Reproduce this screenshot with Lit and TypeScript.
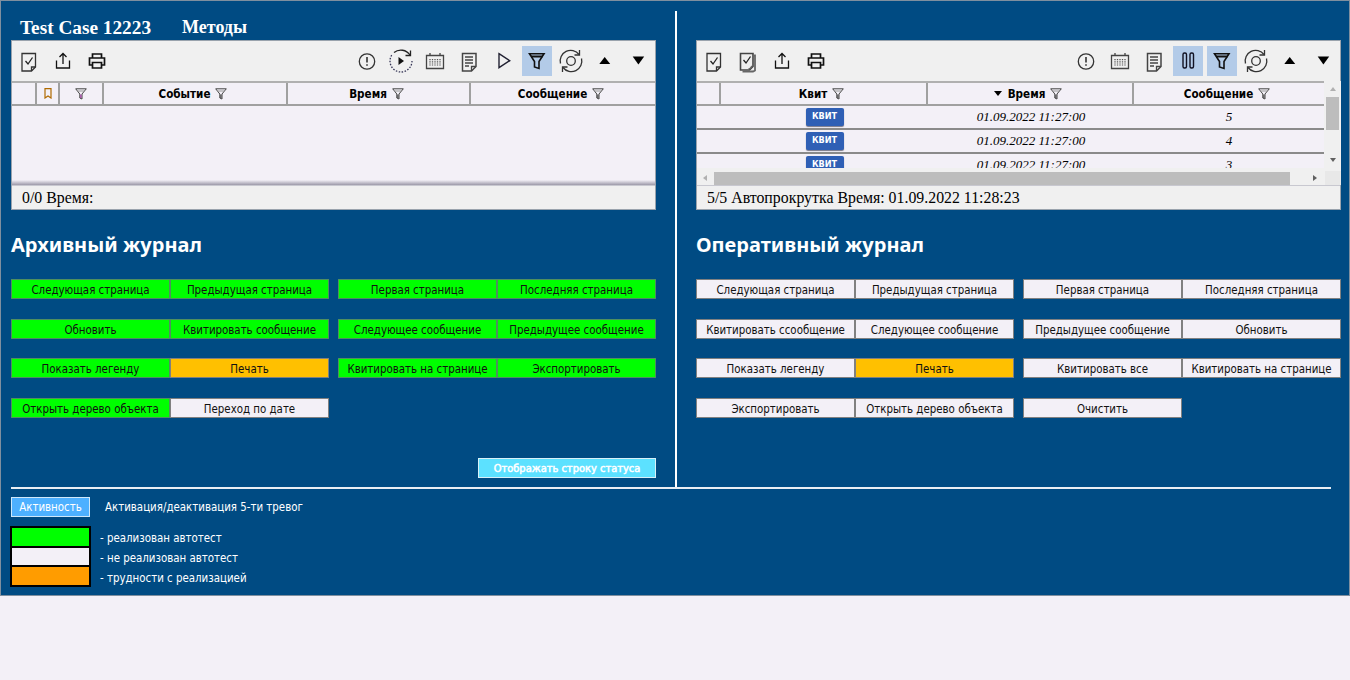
import { LitElement, html, css, svg } from "lit";
import { customElement } from "lit/decorators.js";

type Kind = "g" | "w" | "o" | "";
type Btn = [string, Kind];

const ARCHIVE: Btn[] = [
  ["Следующая страница", "g"], ["Предыдущая страница", "g"], ["Первая страница", "g"], ["Последняя страница", "g"],
  ["Обновить", "g"], ["Квитировать сообщение", "g"], ["Следующее сообщение", "g"], ["Предыдущее сообщение", "g"],
  ["Показать легенду", "g"], ["Печать", "o"], ["Квитировать на странице", "g"], ["Экспортировать", "g"],
  ["Открыть дерево объекта", "g"], ["Переход по дате", "w"],
];

const ONLINE: Btn[] = [
  ["Следующая страница", "w"], ["Предыдущая страница", "w"], ["Первая страница", "w"], ["Последняя страница", "w"],
  ["Квитировать ссообщение", "w"], ["Следующее сообщение", "w"], ["Предыдущее сообщение", "w"], ["Обновить", "w"],
  ["Показать легенду", "w"], ["Печать", "o"], ["Квитировать все", "w"], ["Квитировать на странице", "w"],
  ["Экспортировать", "w"], ["Открыть дерево объекта", "w"], ["Очистить", "w"],
];

const ic = (body: unknown) => html`<svg width="30" height="30" viewBox="0 0 30 30" fill="none" stroke="#222" stroke-width="1.3">${body}</svg>`;

const ICONS: Record<string, unknown> = {
  ack: ic(svg`<path d="M8 7.500h13.500v13.500l-4 4H8z" stroke="#333"/><path d="M17.500 25v-4h4" stroke="#333"/><path d="M11.500 15l2.500 3 4.500-6.500"/>`),
  ackAll: ic(svg`<path d="M7.500 7.500h12.500v13l-3.500 3.500h-9z" fill="#eee" stroke="#444" stroke-width="1.600"/><path d="M20 9.500h2v15l-2 1h-10.500" stroke="#666" stroke-width="1.800"/><path d="M10.500 14l2.500 3 4.500-6.500"/><path d="M15.500 23l2-1 1.500-2" stroke="#666"/>`),
  export: ic(svg`<path d="M8.500 14.500v7.500h13v-7.500" stroke="#111"/><path d="M15 18V7.500M11.500 11l3.500-3.500 3.500 3.500" stroke="#111"/>`),
  print: ic(svg`<path d="M10.500 12V8h9v4M10.500 19H7.500v-7h15v7h-3" stroke-width="1.700" stroke="#111"/><path d="M10.500 16.500h9v5.500h-9z" stroke-width="1.700" stroke="#111"/>`),
  alert: ic(svg`<circle cx="15" cy="15.500" r="7.700" stroke="#333"/><path d="M15 11v5.500M15 18.200v1.600" stroke-width="1.600" stroke="#333"/>`),
  playClock: ic(svg`<path d="M8 6.500A11 11 0 0 1 24 9" stroke="#222"/><path d="M24.500 4.500v5h-5" stroke="#222"/><path d="M26 15A11 11 0 0 1 4 15a11 11 0 0 1 2.500-7" stroke="#335" stroke-dasharray="1.500 1.500"/><path d="M12.500 11l5.500 4-5.500 4z" fill="#111" stroke="none"/>`),
  calendar: ic(svg`<path d="M6.500 9.500h17v13h-17z" stroke="#444"/><path d="M10 7v3M20 7v3" stroke="#444"/><path d="M10 13v7M12.500 13v7M15 13v7M17.500 13v7M20 13v7" stroke="#555" stroke-dasharray="1.200 1"/>`),
  doc: ic(svg`<path d="M8.500 7.500h13.500v13l-4.500 4.500h-9z" stroke="#444" stroke-width="1.500"/><path d="M17.500 25v-4.500h4.500" stroke="#444"/><path d="M11 11h8M11 14h8M11 17h8M11 20h4" stroke="#444"/>`),
  play: ic(svg`<path d="M11 7.700L21.700 14.700 11 21.700z" stroke="#223" stroke-width="1.400"/>`),
  filter: ic(svg`<path d="M7.500 7.700h14.500L17 15.500v7l-4.500-1.500v-5.500z" stroke="#111" stroke-width="1.600"/><path d="M9 10.500h11.500" stroke="#111" stroke-width="2"/>`),
  sync: ic(svg`<circle cx="15" cy="15" r="4.300" stroke="#333"/><path d="M4.500 17.500A10.500 10.500 0 0 1 23 8.500M25.500 12.500A10.500 10.500 0 0 1 7 21.500" stroke="#333"/><path d="M23.500 4v5h-5M6.500 26v-5h5" stroke="#333"/>`),
  up: ic(svg`<path d="M9.300 18L14.700 11 20.200 18z" fill="#000" stroke="none"/>`),
  down: ic(svg`<path d="M8.700 10.500h11.500l-5.800 8z" fill="#000" stroke="none"/>`),
  pause: ic(svg`<rect x="10" y="7" width="3.500" height="15" rx="1.500" stroke="#112" stroke-width="1.400"/><rect x="17" y="7" width="3.500" height="15" rx="1.500" stroke="#112" stroke-width="1.400"/>`),
};

const funnel = (stem = "#333") => html`<svg class="funnel" width="12" height="12" viewBox="0 0 12 12" fill="none"><path d="M.7.8h10.600L7 6v5l-2.200-1V6z" stroke="#444" stroke-width="1"/><path d="M2.500 3h7" stroke="#999"/><path d="M5.900 6.500v3.500" stroke="${stem}"/></svg>`;

const bookmark = html`<svg width="8" height="11" viewBox="0 0 8 11" fill="none"><path d="M1 .7h6v9.300L4 8 1 10z" stroke="#b06a00" stroke-width="1.200"/></svg>`;

const tool = (name: string, on = false) => html`<span class="tool ${on ? "on" : ""}">${ICONS[name]}</span>`;

@customElement("app-root")
export class AppRoot extends LitElement {
  static styles = css`
    :host { display: block; width: 1350px; height: 680px; background: #f3f0f7; font-family: "DejaVu Sans", sans-serif; font-stretch: condensed; }
    .page { height: 596px; box-sizing: border-box; background: #004b83; border: 1px solid #7f8f9f; padding: 10px 0 0 10px; color: #fff; }
    .top { display: flex; height: 476px; }
    .col { width: 645px; position: relative; }
    .divider { width: 2px; background: #fff; margin: 0 19px; }
    .heading { height: 29px; display: flex; gap: 31px; padding-left: 9px; font: bold 19.300px/33px "Liberation Serif", serif; }
    .heading span + span { font-size: 18px; }
    .widget { height: 170px; box-sizing: border-box; border: 1px solid #9aa3ad; background: #f3f0f7; color: #000; display: flex; flex-direction: column; }
    .toolbar { height: 40px; flex: none; box-sizing: border-box; padding: 5px 1px 5px 2px; background: #f0f0f0; display: flex; gap: 4px; }
    .tool { width: 30px; height: 30px; flex: none; }
    .tool svg { display: block; }
    .tool.on { background: #b3cbe8; }
    .spacer { flex: 1; }
    .thead { display: grid; height: 25px; box-sizing: border-box; border-top: 2px solid #b0b0b0; border-bottom: 2px solid #a0a0a0; flex: none; }
    .th { border-right: 2px solid #a0a0a0; font-size: 11.600px; font-weight: 700; display: flex; align-items: center; justify-content: center; gap: 5px; line-height: 20px; white-space: nowrap; }
    .th.named { padding-right: 4px; }
    .th:last-child { border-right: 0; }
    .funnel { flex: none; }
    .tbody { flex: 1; min-height: 0; background: #f3f0f7; }
    .shade { height: 5px; flex: none; background: linear-gradient(#f3f0f7, #9c99a8); }
    .status { height: 24px; flex: none; box-sizing: border-box; padding-left: 10px; background: #f0f0f0; border-top: 1px solid #c8c8d0; font: 15.850px/24px "Liberation Serif", serif; white-space: nowrap; }
    .live { flex: 1; min-height: 0; display: grid; grid-template-columns: 627px 17px; grid-template-rows: 1fr 17px; }
    .live-main { min-height: 0; overflow: hidden; display: flex; flex-direction: column; }
    .rows { flex: 1; min-height: 0; overflow: hidden; }
    .row { height: 24px; box-sizing: border-box; border-bottom: 2px solid #8a8a8a; display: grid; align-items: center; font: italic 13px/20px "Liberation Serif", serif; text-align: center; }
    .kvit { justify-self: center; width: 38px; height: 18px; box-sizing: border-box; border-radius: 2px; background: #2f5fb5; color: #fff; font: normal 700 9px/17px "DejaVu Sans", sans-serif; font-stretch: condensed; box-shadow: 0 1px 1px #778; }
    .vbar { background: #f0f0f0; display: flex; flex-direction: column; align-items: center; }
    .thumb { width: 13px; height: 33px; background: #bdbdbd; margin-top: 6px; }
    .arrow { width: 0; height: 0; flex: none; border: 3px solid transparent; }
    .a-up { border-bottom: 4px solid #b0b0b0; border-top-width: 0; margin-top: 6px; }
    .a-down { border-top: 4px solid #606060; border-bottom-width: 0; margin-top: auto; margin-bottom: 6px; }
    .a-left { border-right: 4px solid #b0b0b0; border-left-width: 0; margin-left: 6px; }
    .a-right { border-left: 4px solid #606060; border-right-width: 0; margin-left: 23px; }
    .a-sort { border-top: 5px solid #000; border-left-width: 4px; border-right-width: 4px; border-bottom-width: 0; margin-right: 1px; }
    .hbar { grid-column: 1 / 3; background: #f0f0f0; display: flex; align-items: center; box-sizing: border-box; padding-top: 3px; }
    .hthumb { width: 576px; flex: none; height: 13px; background: #bdbdbd; margin-left: 7px; }
    .corner { flex: 1; height: 14px; background: #e8e8e8; margin-left: 8px; }
    h2 { margin: 0; height: 69px; font-family: "Noto Sans", sans-serif; font-stretch: normal; font-size: 20px; font-weight: 700; line-height: 69px; }
    .grid { display: grid; grid-template-columns: 159px 159px 168px 159px; grid-auto-rows: 20px; row-gap: 19.700px; width: 645px; }
    .grid > :nth-child(4n + 3) { margin-left: 9px; }
    .b { box-sizing: border-box; height: 20px; font-size: 11.400px; line-height: 20px; text-align: center; color: #111; border: 1px solid #808080; white-space: nowrap; }
    .b.g { background: #00ff00; border-color: #4f8f5f; }
    .b.w { background: #f3f0f7; }
    .b.o { background: #ffc000; }
    .status-toggle { position: absolute; right: 0; top: 447px; width: 178px; height: 20px; box-sizing: border-box; background: #5ce1ff; border: 1px solid #d8f0f8; color: #fff; font-size: 11px; line-height: 19px; text-align: center; -webkit-text-stroke: 0.500px #fff; }
    hr { border: 0; height: 2px; background: #e8eef4; margin: 0; width: 1320px; }
    .footer { display: flex; flex-direction: column; }
    .active-row { display: flex; align-items: center; gap: 15px; height: 20px; margin-top: 8px; font-size: 11.400px; }
    .active-btn { box-sizing: border-box; width: 79px; height: 20px; background: #4db0ff; border: 1px solid #cfe8fa; text-align: center; line-height: 19px; }
    .legend { margin-top: 9px; margin-left: -1px; display: grid; grid-template-columns: 81px auto; column-gap: 9px; font-size: 11.400px; line-height: 20px; justify-content: start; }
    .swatches { border: 2px solid #000; display: flex; flex-direction: column; gap: 2px; background: #000; height: 61px; box-sizing: border-box; }
    .swatches div { flex: 1; }
    .notes { padding-top: 2px; }
    .notes div { height: 20px; }
  `;

  private _header(cols: string[], tpl: string) {
    return html`<div class="thead" style="grid-template-columns:${tpl}">
      ${cols.map((c) => {
        if (c === "mark") return html`<div class="th">${bookmark}</div>`;
        if (c === "pink") return html`<div class="th">${funnel("#a020a0")}</div>`;
        if (c === "sort") return html`<div class="th named"><span class="arrow a-sort"></span>Время${funnel()}</div>`;
        return c ? html`<div class="th named">${c}${funnel()}</div>` : html`<div class="th"></div>`;
      })}
    </div>`;
  }

  private _buttons(list: Btn[]) {
    return html`<div class="grid">${list.map(([t, k]) => html`<div class="b ${k}">${t}</div>`)}</div>`;
  }

  render() {
    const liveCols = "24px 207px 206px 190px";
    return html`<div class="page">
      <div class="top">
        <div class="col">
          <div class="heading"><span>Test Case 12223</span><span>Методы</span></div>
          <div class="widget">
            <div class="toolbar">
              ${tool("ack")}${tool("export")}${tool("print")}<span class="spacer"></span>
              ${tool("alert")}${tool("playClock")}${tool("calendar")}${tool("doc")}${tool("play")}${tool("filter", true)}${tool("sync")}${tool("up")}${tool("down")}
            </div>
            ${this._header(["", "mark", "pink", "Событие", "Время", "Сообщение"], "25px 23px 44px 184px 183px 1fr")}
            <div class="tbody"></div>
            <div class="shade"></div>
            <div class="status">0/0 Время:</div>
          </div>
          <h2>Архивный журнал</h2>
          ${this._buttons(ARCHIVE)}
          <div class="status-toggle">Отображать строку статуса</div>
        </div>
        <div class="divider"></div>
        <div class="col">
          <div class="heading"></div>
          <div class="widget">
            <div class="toolbar">
              ${tool("ack")}${tool("ackAll")}${tool("export")}${tool("print")}<span class="spacer"></span>
              ${tool("alert")}${tool("calendar")}${tool("doc")}${tool("pause", true)}${tool("filter", true)}${tool("sync")}${tool("up")}${tool("down")}
            </div>
            <div class="live">
              <div class="live-main">
                ${this._header(["", "Квит", "sort", "Сообщение"], liveCols)}
                <div class="rows">
                  ${[5, 4, 3].map((n) => html`<div class="row" style="grid-template-columns:${liveCols}"><span></span><span class="kvit">КВИТ</span><span>01.09.2022 11:27:00</span><span>${n}</span></div>`)}
                </div>
              </div>
              <div class="vbar"><span class="arrow a-up"></span><span class="thumb"></span><span class="arrow a-down"></span></div>
              <div class="hbar"><span class="arrow a-left"></span><span class="hthumb"></span><span class="arrow a-right"></span><span class="corner"></span></div>
            </div>
            <div class="status">5/5 Автопрокрутка Время: 01.09.2022 11:28:23</div>
          </div>
          <h2>Оперативный журнал</h2>
          ${this._buttons(ONLINE)}
        </div>
      </div>
      <hr />
      <div class="footer">
        <div class="active-row"><div class="active-btn">Активность</div><span>Активация/деактивация 5-ти тревог</span></div>
        <div class="legend">
          <div class="swatches"><div style="background:#00ff00"></div><div style="background:#f3f0f7"></div><div style="background:#ff9c00"></div></div>
          <div class="notes"><div>- реализован автотест</div><div>- не реализован автотест</div><div>- трудности с реализацией</div></div>
        </div>
      </div>
    </div>`;
  }
}
